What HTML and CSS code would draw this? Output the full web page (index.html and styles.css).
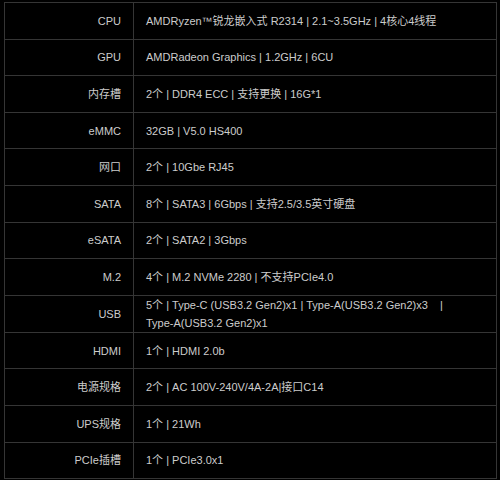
FILE: index.html
```html
<!DOCTYPE html>
<html lang="zh">
<head>
<meta charset="utf-8">
<link rel="stylesheet" href="styles.css">
</head>
<body>
<table class="specs">
  <tr><th>CPU</th><td>AMDRyzen™锐龙嵌入式 R2314 | 2.1~3.5GHz | 4核心4线程</td></tr>
  <tr><th>GPU</th><td>AMDRadeon Graphics | 1.2GHz | 6CU</td></tr>
  <tr><th>内存槽</th><td>2个 | DDR4 ECC | 支持更换 | 16G*1</td></tr>
  <tr><th>eMMC</th><td>32GB | V5.0 HS400</td></tr>
  <tr><th>网口</th><td>2个 | 10Gbe RJ45</td></tr>
  <tr><th>SATA</th><td>8个 | SATA3 | 6Gbps | 支持2.5/3.5英寸硬盘</td></tr>
  <tr><th>eSATA</th><td>2个 | SATA2 | 3Gbps</td></tr>
  <tr><th>M.2</th><td>4个 | M.2 NVMe 2280 | 不支持PCIe4.0</td></tr>
  <tr><th>USB</th><td>5个 | Type-C (USB3.2 Gen2)x1 | Type-A(USB3.2 Gen2)x3 &nbsp; &nbsp;|<br>Type-A(USB3.2 Gen2)x1</td></tr>
  <tr><th>HDMI</th><td>1个 | HDMI 2.0b</td></tr>
  <tr><th>电源规格</th><td>2个 | AC 100V-240V/4A-2A|接口C14</td></tr>
  <tr><th>UPS规格</th><td>1个 | 21Wh</td></tr>
  <tr><th>PCIe插槽</th><td>1个 | PCIe3.0x1</td></tr>
</table>
</body>
</html>
```

FILE: styles.css
```css
html, body {
  margin: 0;
  padding: 0;
  background: #000;
}
body {
  padding: 2px 0 0 4px;
  font-family: "Liberation Sans", "Noto Sans CJK SC", sans-serif;
  font-size: 11px;
  color: #cccccc;
}
.specs {
  border-collapse: collapse;
  width: 493px;
}
.specs tr {
  height: 36.6px;
}
.specs th,
.specs td {
  border: 1px solid #353535;
  font-weight: normal;
  line-height: 18px;
  vertical-align: middle;
  padding: 0 12px;
}
.specs th {
  width: 104px;
  text-align: right;
}
.specs td {
  text-align: left;
}
```
